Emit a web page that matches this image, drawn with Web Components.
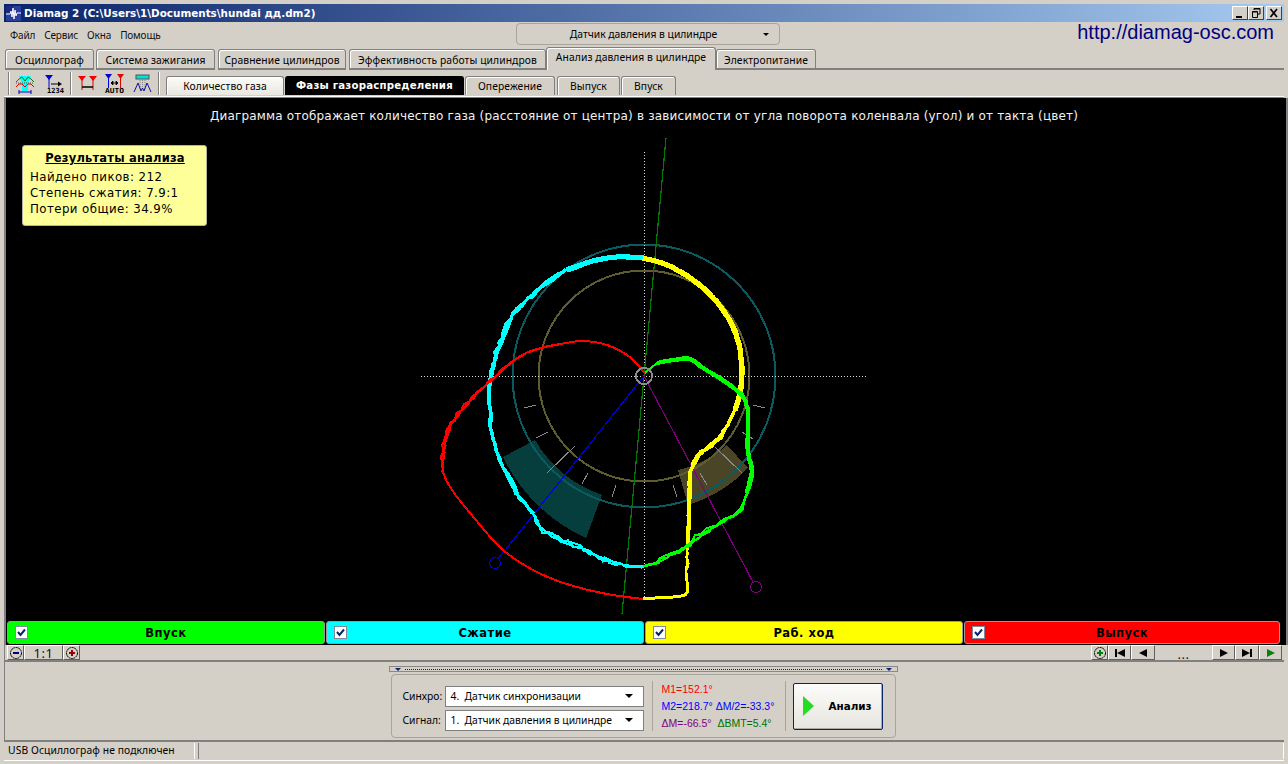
<!DOCTYPE html>
<html>
<head>
<meta charset="utf-8">
<title>Diamag 2</title>
<style>
  html, body { margin: 0; height: 764px; overflow: hidden; background: #d4d0c8; }
  body { font: 10.3px "Noto Sans", "DejaVu Sans", sans-serif; color: #000; }
</style>
</head>
<body>
<diamag-app>
  <title-bar>Diamag 2 (C:\Users\1\Documents\hundai дд.dm2)</title-bar>
  <head-row></head-row>
  <tab-strip>
    <tab-item w="89" m="2">Осциллограф</tab-item>
    <tab-item w="119" m="3">Система зажигания</tab-item>
    <tab-item w="128" m="3">Сравнение цилиндров</tab-item>
    <tab-item w="197" m="0">Эффективность работы цилиндров</tab-item>
    <tab-item w="170" m="0" active>Анализ давления в цилиндре</tab-item>
    <tab-item w="100" m="0">Электропитание</tab-item>
  </tab-strip>
  <tool-row></tool-row>
  <cyl-diagram>
    <result-box title="Результаты анализа">
      <div>Найдено пиков: 212</div>
      <div>Степень сжатия: 7.9:1</div>
      <div>Потери общие: 34.9%</div>
    </result-box>
  </cyl-diagram>
  <stroke-legend>
    <stroke-item color="#00ff00">Впуск</stroke-item>
    <stroke-item color="#00ffff">Сжатие</stroke-item>
    <stroke-item color="#ffff00">Раб. ход</stroke-item>
    <stroke-item color="#ff0000">Выпуск</stroke-item>
  </stroke-legend>
  <nav-bar></nav-bar>
  <analysis-panel></analysis-panel>
  <status-bar></status-bar>
</diamag-app>

<script>
class DiamagApp extends HTMLElement {
  constructor() {
    super();
    this.attachShadow({ mode: "open" }).innerHTML = `
    <style>
      :host { display: flex; flex-direction: column; width: 1288px; height: 764px; padding-top: 4px; box-sizing: border-box; }
    </style>
    <slot></slot>`;
  }
}

class TitleBar extends HTMLElement {
  constructor() {
    super();
    this.attachShadow({ mode: "open" }).innerHTML = `
    <style>
      :host {
        display: flex; align-items: center; height: 18px; margin: 0 4px; flex: none;
        background: linear-gradient(90deg, #0a246a, #a6caf0);
        color: #fff; font: bold 10.4px "DejaVu Sans", sans-serif;
      }
      .logo { margin: 0 3px 0 2px; }
      .name { flex: 1; white-space: nowrap; }
      .btns { display: flex; margin-right: 2px; }
      .b {
        width: 16px; height: 14px; box-sizing: border-box; background: #d4d0c8; margin-left: 0;
        border: 1px solid; border-color: #fff #404040 #404040 #fff; display: block;
      }
      .b.x { margin-left: 2px; }
      svg { display: block; }
    </style>
    <svg class="logo" width="15" height="15" viewBox="0 0 15 15">
      <rect width="15" height="15" fill="#2a3f9a"/>
      <rect x="0" y="0" width="7" height="7" fill="#1b2a80"/>
      <path d="M0 8H4L5 5 6 11 7 2 8 13 9 4 10 10 11 7H15" fill="none" stroke="#fff"/>
    </svg>
    <span class="name"><slot></slot></span>
    <span class="btns">
      <span class="b"><svg width="14" height="12"><rect x="3" y="9" width="6" height="2"/></svg></span>
      <span class="b"><svg width="14" height="12"><path d="M5 3V1.5H11V7H9M3.5 4.5H8.5V10.5H3.5Z M5 2H11 M3.5 5H8.5" fill="none" stroke="#000"/></svg></span>
      <span class="b x"><svg width="14" height="12"><path d="M3.5 2 10 10M10 2 3.5 10" stroke="#000" stroke-width="1.7"/></svg></span>
    </span>`;
  }
}

class HeadRow extends HTMLElement {
  constructor() {
    super();
    this.attachShadow({ mode: "open" }).innerHTML = `
    <style>
      :host { display: grid; grid-template-columns: 516px 264px 1fr; height: 25px; flex: none; }
      .menu { display: flex; gap: 9px; padding: 6px 0 0 10px; font-size: 10px; letter-spacing: -.15px; color: #111; height: 14px; }
      .combo {
        height: 22px; margin-top: 1px; box-sizing: border-box; border: 1px solid #a8a49c; border-radius: 4px;
        display: grid; grid-template-columns: 1fr 14px; align-items: center; text-align: center; padding: 0 2px 0 7px;
      }
      .arrow { width: 0; height: 0; border: 3px solid transparent; border-top: 3px solid #000; border-bottom: 0; }
      .url { text-align: right; padding-right: 14px; font: 20px/22px "Liberation Sans", sans-serif; color: #000080; margin-top: -1px; }
    </style>
    <div class="menu"><span>Файл</span><span>Сервис</span><span>Окна</span><span>Помощь</span></div>
    <div class="combo"><span>Датчик давления в цилиндре</span><span class="arrow"></span></div>
    <div class="url">http://diamag-osc.com</div>`;
  }
}

class TabStrip extends HTMLElement {
  constructor() {
    super();
    this.attachShadow({ mode: "open" }).innerHTML = `
    <style>
      :host { display: flex; align-items: flex-end; height: 23px; margin-left: 5px; margin-right: 4px; flex: none; }
      .fill { flex: 1; height: 1px; border-bottom: 2px solid #808080; margin-bottom: 0; }
    </style>
    <slot></slot><div class="fill"></div>`;
  }
}

class TabItem extends HTMLElement {
  constructor() {
    super();
    const w = this.getAttribute("w");
    const m = this.getAttribute("m");
    this.attachShadow({ mode: "open" }).innerHTML = `
    <style>
      :host {
        display: block; width: ${w}px; margin-right: ${m}px; height: 21px; box-sizing: border-box; flex: none;
        border: 1px solid #808080; border-bottom: 2px solid #808080; border-radius: 3px 3px 0 0;
        box-shadow: inset 1px 1px 0 #fff; text-align: center; line-height: 20px; white-space: nowrap;
        background: #d4d0c8; font-size: 10.3px; letter-spacing: .1px;
      }
      :host([active]) { height: 23px; border-bottom: 0; line-height: 19px; }
    </style>
    <slot></slot>`;
  }
}

class ToolRow extends HTMLElement {
  constructor() {
    super();
    this.attachShadow({ mode: "open" }).innerHTML = `
    <style>
      :host {
        display: flex; height: 28px; flex: none; margin: 0 4px; box-sizing: border-box; padding-bottom: 2px;
        align-items: stretch; border-bottom: 1px solid #808080; box-shadow: inset 0 -1px 0 #fff;
      }
      .grp { display: flex; align-items: center; gap: 10px; border-left: 1px solid #808080; box-shadow: inset 1px 0 0 #fff; margin-top: 2px; }
      .grp.first { margin-left: 4px; width: 62px; box-sizing: border-box; padding-left: 6px; }
      .grp.second { width: 88px; box-sizing: border-box; gap: 8px; padding-left: 7px; }
      .grp.third { width: 8px; box-sizing: border-box; }
      .subs { display: flex; align-items: flex-end; }
      .s {
        height: 19px; box-sizing: border-box; border: 1px solid #808080; border-bottom: 0; border-radius: 3px 3px 0 0;
        text-align: center; line-height: 19px; box-shadow: inset 1px 1px 0 #fff; margin-right: 1px; font-size: 10.3px; letter-spacing: .1px;
      }
      .s.light { background: linear-gradient(#fbfbf8, #e9e7e0); }
      .s.on {
        background: #000; color: #fff; font: bold 10.2px "DejaVu Sans", sans-serif; letter-spacing: .2px; border-color: #000; box-shadow: none; line-height: 18px;
      }
      svg { display: block; flex: none; overflow: visible; }
      text { font: bold 7px "DejaVu Sans Mono", "Liberation Mono", monospace; }
    </style>
    <div class="grp first">
      <svg width="20" height="20" viewBox="0 0 20 20">
        <path d="M4 2H16L13 9V17H7V9Z" fill="#00ffff"/>
        <path d="M1 8 4 5 7 3 10 7 13 3 16 5 19 8" fill="none" stroke="#008000"/>
        <path d="M1 9H19" stroke="#555" stroke-dasharray="1 1"/>
        <path d="M1 13 4 10 7 10 10 13 13 10 16 10 19 13" fill="none" stroke="#e00000"/>
        <path d="M4 18H16M4 16V20M16 16V20" stroke="#0000c0"/>
      </svg>
      <svg width="18" height="20" viewBox="0 0 18 20">
        <path d="M0 1H8L4 6Z" fill="#0000e0"/><path d="M4 5V15" stroke="#0000e0"/>
        <path d="M6 10H14" stroke="#000"/><path d="M17 10 13 7.5V12.5Z"/>
        <text x="2" y="19">1234</text>
      </svg>
    </div>
    <div class="grp second">
      <svg width="19" height="20" viewBox="0 0 19 20">
        <path d="M0 2H8L4 7Z M11 2H19L15 7Z" fill="#f00000"/><path d="M4 6V16M15 6V16" stroke="#e00000"/>
        <path d="M4 13H15" stroke="#000" stroke-width="1.5"/>
      </svg>
      <svg width="20" height="20" viewBox="0 0 20 20">
        <path d="M0 0H7L3.5 5Z" fill="#0000e0"/><path d="M3.5 4V14" stroke="#0000e0"/>
        <path d="M12 0H19L15.5 5Z" fill="#f00000"/><path d="M15.5 4V14" stroke="#e00000"/>
        <path d="M6 9H13M6 9 8 7V11ZM13 9 11 7V11Z" stroke="#000" stroke-width=".8"/>
        <text x="0" y="19" textLength="19" lengthAdjust="spacingAndGlyphs">AUTO</text>
      </svg>
      <svg width="19" height="20" viewBox="0 0 19 20">
        <rect x="3" y="1" width="13" height="4" fill="#00e0e0" stroke="#555"/>
        <path d="M7 6V16M9.5 6V16M12 6V16" stroke="#888" stroke-dasharray="1 1"/>
        <path d="M1 18 5 9 8 17 9.5 14 11 17 14 9 18 18" fill="none" stroke="#1010a0"/>
      </svg>
    </div>
    <div class="grp third"></div>
    <div class="subs">
      <div class="s light" style="width:118px">Количество газа</div>
      <div class="s on" style="width:179px">Фазы газораспределения</div>
      <div class="s" style="width:90px;margin-right:2px">Опережение</div>
      <div class="s" style="width:63px">Выпуск</div>
      <div class="s" style="width:55px">Впуск</div>
    </div>`;
  }
}

// curve points are in page pixels: [x, y, spread]
const curves = [
  { color: "#00ffff", width: 5, seed: 11, pts: [[644,258,.2],[617,257,.2],[593,261,.3],[567,270,.5]] },
  { color: "#00ffff", width: 3, seed: 12, pts: [[567,270,1.2],[547,283,1.8],[527,300,2],[510,320,2],[500,343,2],[492,370,1.6],[489,393,1],[490,410,1],[492,433,1.2],[500,460,1.2],[510,480,1.2],[520,498,1.2],[533,513,1]] },
  { color: "#00ffff", width: 2, seed: 13, pts: [[533,513,1],[540,528,2.2],[557,538,2.6],[580,547,2.6],[600,557,2.6],[620,565,2],[643,567,1.2]] },
  { color: "#ff0000", width: 2, seed: 23, pts: [[643,599,0],[607,594,0],[570,585,0],[537,572,0],[503,550,0],[470,513,0],[450,487,0],[443,472,0]] },
  { color: "#ff0000", width: 2, seed: 29, pts: [[443,472,.8],[442,457,2],[448,430,2.2],[462,410,2],[477,393,1.4],[500,373,1.2],[517,358,.7],[537,349,.5],[560,344,.4]] },
  { color: "#ff0000", width: 2, seed: 31, pts: [[560,344,0],[583,341,0],[607,345,0],[627,355,0],[640,367,0],[644,373,0]] },
  { color: "#ffff00", width: 5, seed: 37, pts: [[643,258,.2],[667,265,.3],[693,280,.4],[717,302,.4],[733,327,.4],[740,350,.4],[742,373,.4],[740,393,.4],[735,410,.5]] },
  { color: "#ffff00", width: 3, seed: 38, pts: [[735,410,1],[720,437,1.8],[697,457,2],[690,473,.8]] },
  { color: "#ffff00", width: 4, seed: 39, pts: [[690,473,.4],[689,510,.3],[688,543,.4]] },
  { color: "#ffff00", width: 2, seed: 40, pts: [[688,543,1],[687,570,1.8],[688,590,1.2]] },
  { color: "#ffff00", width: 3, seed: 41, pts: [[688,590,0],[685,595,0],[673,597,0],[655,598,0],[643,599,0]] },
  { color: "#00ff00", width: 2, seed: 43, pts: [[643,567,1.2],[657,562,2.2],[683,548,2.2],[707,530,2.2],[737,513,2.4],[747,493,1.2]] },
  { color: "#00ff00", width: 4, seed: 47, pts: [[747,493,.8],[752,470,.8],[748,453,.6],[748,430,.5],[748,410,.5],[747,407,.4],[742,395,.4],[720,378,.5],[703,368,.6],[690,359,.4],[673,360,.3],[657,363,.2]] },
  { color: "#00ff00", width: 2, seed: 48, pts: [[657,363,0],[645,373,0]] }
];

function rng(seed) {
  let s = seed;
  return () => {
    s = (s * 16807) % 2147483647;
    return s / 2147483647;
  };
}

function smooth(pts) {
  const out = [];
  for (let i = 0; i < pts.length - 1; i++) {
    const p0 = pts[Math.max(i - 1, 0)], p1 = pts[i], p2 = pts[i + 1], p3 = pts[Math.min(i + 2, pts.length - 1)];
    const n = Math.max(2, Math.round(Math.hypot(p2[0] - p1[0], p2[1] - p1[1]) / 6));
    for (let j = 0; j < n; j++) {
      const t = j / n, a = [0, 1, 2].map((k) => 0.5 * (2 * p1[k] + (p2[k] - p0[k]) * t + (2 * p0[k] - 5 * p1[k] + 4 * p2[k] - p3[k]) * t * t + (3 * p1[k] - p0[k] - 3 * p2[k] + p3[k]) * t * t * t));
      out.push(a);
    }
  }
  out.push(pts[pts.length - 1]);
  return out;
}

function tracePaths(c) {
  const base = smooth(c.pts);
  const rand = rng(c.seed * 977);
  const strands = c.pts.some((p) => p[2] > 0.1) ? 3 : 1;
  let res = "";
  for (let k = 0; k < strands; k++) {
    const d = base.map((p) => {
      const dx = (rand() - 0.5) * 2 * p[2], dy = (rand() - 0.5) * 2 * p[2];
      return `${(p[0] + dx).toFixed(1)} ${(p[1] + dy).toFixed(1)}`;
    });
    res += `<path d="M${d.join("L")}" stroke="${c.color}" stroke-width="${c.width}" fill="none"/>`;
  }
  return res;
}

class CylDiagram extends HTMLElement {
  constructor() {
    super();
    const ticks = [[524,408,536,405],[753,405,765,408],[536,438,548,432],[547,473,575,446],[582,484,588,473],[612,497,616,485],[673,485,677,497],[700,473,707,485],[715,447,742,473],[742,432,753,439]];
    this.attachShadow({ mode: "open" }).innerHTML = `
    <style>
      :host { display: block; position: relative; height: 523px; flex: none; background: #000; margin: 0 2px 0 6px; box-shadow: -2px 0 0 #808080, 2px 0 0 #808080; }
      svg { display: block; }
      text { font: 12px "DejaVu Sans", sans-serif; fill: #f2f2f2; letter-spacing: .18px; }
    </style>
    <svg width="1276" height="523" viewBox="6 98 1276 523" shape-rendering="crispEdges">
      <text x="644" y="120" text-anchor="middle">Диаграмма отображает количество газа (расстояние от центра) в зависимости от угла поворота коленвала (угол) и от такта (цвет)</text>
      <path d="M535 440 A126 126 0 0 0 602 495 L586 538 A170 170 0 0 1 503 457 Z" fill="#063d3d"/>
      <path d="M727 445 A110 110 0 0 1 678 470 L688 505 A140 140 0 0 0 748 468 Z" fill="#4a4526"/>
      <circle cx="644" cy="376" r="131.5" fill="none" stroke="#0b5a5f" stroke-width="2"/>
      <circle cx="644" cy="376" r="105.5" fill="none" stroke="#5f5c2f" stroke-width="2"/>
      <path d="M420.5 376.5H867M644.5 152V600" stroke="#ddd" stroke-dasharray="1 2" fill="none"/>
      <path d="M666 138 622 614" stroke="#007a00" stroke-width="1.2" fill="none"/>
      <path d="M644 376 498 559" stroke="#0000e6" stroke-width="1.2" fill="none"/>
      <circle cx="495" cy="563" r="5.5" stroke="#0000e6" fill="none"/>
      <path d="M644 376 753 582" stroke="#800080" stroke-width="1.2" fill="none"/>
      <circle cx="756" cy="587" r="5.5" stroke="#800080" fill="none"/>
      ${ticks.map((t) => `<line x1="${t[0]}" y1="${t[1]}" x2="${t[2]}" y2="${t[3]}" stroke="#8a8a8a"/>`).join("")}
      ${curves.map(tracePaths).join("")}
      <circle cx="644" cy="376" r="8" fill="none" stroke="#8c8c8c" stroke-width="2"/>
    </svg>
    <slot></slot>`;
  }
}

class ResultBox extends HTMLElement {
  constructor() {
    super();
    this.attachShadow({ mode: "open" }).innerHTML = `
    <style>
      :host {
        position: absolute; left: 16px; top: 47px; width: 185px; height: 81px; box-sizing: border-box;
        background: #ffff99; border: 1px solid #b4b4a0; border-radius: 3px; padding: 4px 7px;
        color: #000; font: 11.8px/16px "DejaVu Sans", sans-serif; letter-spacing: .42px;
      }
      h3 { margin: 0 0 3px; font: bold 11.5px/16px "DejaVu Sans", sans-serif; text-align: center; text-decoration: underline; letter-spacing: .2px; padding-left: 1px; }
    </style>
    <h3>${this.getAttribute("title")}</h3>
    <slot></slot>`;
  }
}

class StrokeLegend extends HTMLElement {
  constructor() {
    super();
    this.attachShadow({ mode: "open" }).innerHTML = `
    <style>
      :host { display: grid; grid-template-columns: 318px 318px 318px 316px; gap: 1px; height: 24px; flex: none; background: #000; margin: 0 2px 0 6px; padding: 0 1px 1px; box-sizing: border-box; box-shadow: -2px 0 0 #808080, 2px 0 0 #808080; }
    </style>
    <slot></slot>`;
  }
}

class StrokeItem extends HTMLElement {
  constructor() {
    super();
    this.attachShadow({ mode: "open" }).innerHTML = `
    <style>
      :host {
        display: grid; grid-template-columns: 1fr auto 1fr; align-items: center; box-sizing: border-box; height: 23px;
        background: ${this.getAttribute("color")}; border: 1px solid #9a9a9a; border-radius: 3px;
        font: bold 11.5px "DejaVu Sans", sans-serif; letter-spacing: .5px; color: #000;
      }
      .chk { display: block; width: 13px; height: 13px; box-sizing: border-box; background: #fff; border: 1px solid #7f8aa0; margin-left: 7px; }
      svg { display: block; }
    </style>
    <span><span class="chk"><svg width="11" height="11"><path d="M2 5 4.5 8 9 2.5" fill="none" stroke="#0a246a" stroke-width="2"/></svg></span></span>
    <span><slot></slot></span>`;
  }
}

class NavBar extends HTMLElement {
  constructor() {
    super();
    const round = (color, plus) => `<svg width="12" height="12" viewBox="0 0 12 12"><circle cx="6" cy="6" r="5.5" fill="none" stroke="#000" stroke-dasharray="2 .5"/><path d="M3 6H9${plus ? "M6 3V9" : ""}" stroke="${color}" stroke-width="2"/></svg>`;
    const ic = (d, fill) => `<svg width="14" height="10" viewBox="0 0 14 10"><path d="${d}" fill="${fill || "#000"}"/></svg>`;
    this.attachShadow({ mode: "open" }).innerHTML = `
    <style>
      :host { display: flex; height: 17px; flex: none; margin: 0 4px; padding-left: 2px; box-sizing: border-box; border-left: 1px solid #808080; border-bottom: 2px solid #808080; color: #111; }
      .b {
        display: flex; align-items: center; justify-content: center; height: 15px; box-sizing: border-box; flex: none;
        border: 1px solid; border-color: #fff #606060 #606060 #fff; font-size: 13px; letter-spacing: .5px;
      }
      .flat { border-color: transparent; }
      .gap { flex: 1; }
      svg { display: block; }
    </style>
    <div class="b" style="width:17px">${round("#000080")}</div>
    <div class="b" style="width:39px">1:1</div>
    <div class="b" style="width:17px">${round("#900000", true)}</div>
    <div class="gap"></div>
    <div class="b" style="width:17px">${round("#008000", true)}</div>
    <div class="b" style="width:23px">${ic("M2 1H4V9H2ZM4 5 12 1V9Z")}</div>
    <div class="b" style="width:24px">${ic("M3 5 11 1V9Z")}</div>
    <div class="b flat" style="width:57px;padding-top:2px">...</div>
    <div class="b" style="width:23px">${ic("M11 5 3 1V9Z")}</div>
    <div class="b" style="width:24px">${ic("M2 1 10 5 2 9ZM10 1H12V9H10Z")}</div>
    <div class="b" style="width:23px">${ic("M11 5 3 1V9Z", "#0a800a")}</div>
    <div style="width:2px"></div>`;
  }
}

class AnalysisPanel extends HTMLElement {
  constructor() {
    super();
    this.attachShadow({ mode: "open" }).innerHTML = `
    <style>
      :host {
        display: flex; flex-direction: column; align-items: center; height: 80px; flex: none; margin: 0 4px; box-sizing: border-box;
        border-left: 1px solid #808080; border-bottom: 2px solid #808080; padding-top: 4px;
      }
      .split { width: 509px; height: 6px; box-sizing: border-box; border: 1px solid #888; display: flex; align-items: center; gap: 4px; padding: 0 5px; margin-right: 3px; }
      .dots { flex: 1; border-top: 1px dotted #0a246a; }
      .tri { width: 0; height: 0; border: 3px solid transparent; border-top: 3px solid #0a246a; border-bottom: 0; }
      .group {
        width: 505px; height: 64px; box-sizing: border-box; margin: 2px 3px 0 0; border: 1px solid #a8a49c; border-radius: 4px;
        display: flex; align-items: center; padding: 0 11px 0 11px;
      }
      .rows { display: grid; grid-template-columns: 42px 199px; row-gap: 3px; align-items: center; padding-top: 4px; }
      .sel {
        height: 21px; box-sizing: border-box; background: #fff; border: 1px solid #808080; padding-left: 5px; white-space: pre;
        display: grid; grid-template-columns: 1fr 18px; align-items: center;
      }
      .sel i { width: 0; height: 0; border: 4px solid transparent; border-top: 4px solid #000; border-bottom: 0; }
      .sep { width: 1px; height: 50px; background: #a8a49c; flex: none; }
      .vals { width: 132px; box-sizing: border-box; padding-left: 9px; font: 10.5px/17px "Liberation Sans", sans-serif; white-space: pre; padding-top: 1px; }
      .btn {
        width: 90px; height: 47px; box-sizing: border-box; margin-left: 7px; border: 1px solid #0a246a; border-radius: 2px; box-shadow: inset -1px -1px 0 #aaa;
        background: linear-gradient(#fcfcfa, #e6e5de); display: flex; align-items: center; font: bold 10.4px "DejaVu Sans", sans-serif; padding-left: 9px; gap: 15px;
      }
      svg { display: block; }
    </style>
    <div class="split"><span class="tri"></span><span class="dots"></span><span class="tri"></span></div>
    <div class="group">
      <div class="rows">
        <span>Синхро:</span><div class="sel"><span>4.  Датчик синхронизации</span><i></i></div>
        <span>Сигнал:</span><div class="sel"><span>1.  Датчик давления в цилиндре</span><i></i></div>
      </div>
      <div class="sep" style="margin-left:8px"></div>
      <div class="vals"><span style="color:#f00">M1=152.1°</span>
<span style="color:#00f">M2=218.7°</span> <span style="color:#00f">ΔM/2=-33.3°</span>
<span style="color:#800080">ΔM=-66.5°</span>  <span style="color:#007000">ΔBMT=5.4°</span></div>
      <div class="sep"></div>
      <div class="btn"><svg width="11" height="20"><path d="M0 0 11 10 0 20Z" fill="#22dd22"/></svg><span>Анализ</span></div>
    </div>`;
  }
}

class StatusBar extends HTMLElement {
  constructor() {
    super();
    this.attachShadow({ mode: "open" }).innerHTML = `
    <style>
      :host { display: flex; height: 17px; flex: none; margin: 1px 4px 0; gap: 3px; border-bottom: 1px solid #fff; }
      .p { box-sizing: border-box; height: 16px; line-height: 15px; padding-left: 3px; border-right: 1px solid #fff; border-left: 1px solid #808080; white-space: nowrap; letter-spacing: .1px; }
    </style>
    <div class="p" style="width:191px;border-left-color:#d4d0c8">USB Осциллограф не подключен</div>
    <div class="p" style="flex:1"></div>`;
  }
}

customElements.define("diamag-app", DiamagApp);
customElements.define("title-bar", TitleBar);
customElements.define("head-row", HeadRow);
customElements.define("tab-strip", TabStrip);
customElements.define("tab-item", TabItem);
customElements.define("tool-row", ToolRow);
customElements.define("cyl-diagram", CylDiagram);
customElements.define("result-box", ResultBox);
customElements.define("stroke-legend", StrokeLegend);
customElements.define("stroke-item", StrokeItem);
customElements.define("nav-bar", NavBar);
customElements.define("analysis-panel", AnalysisPanel);
customElements.define("status-bar", StatusBar);
</script>
</body>
</html>
